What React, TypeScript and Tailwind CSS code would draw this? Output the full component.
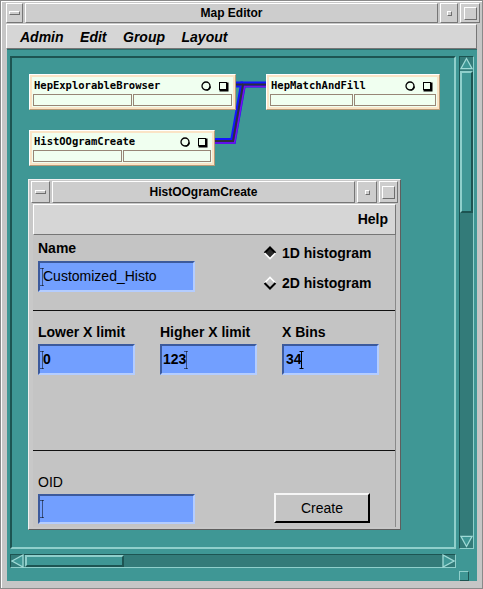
import React from "react";

const SANS = "font-['Liberation_Sans',Arial,Helvetica,sans-serif]";
const MONO = "font-['DejaVu_Sans_Mono','Liberation_Mono',monospace]";

function Raised({ className = "", children }: { className?: string; children?: React.ReactNode }) {
  return (
    <div className={`border border-t-white border-l-white border-r-[#767676] border-b-[#767676] ${className}`}>
      {children}
    </div>
  );
}

function TitleBar({
  title,
  height,
  menuW,
  minW,
  maxW,
}: {
  title: string;
  height: string;
  menuW: string;
  minW: string;
  maxW: string;
}) {
  return (
    <div className={`flex gap-[2px] ${height}`}>
      <Raised className={`${menuW} flex items-center justify-center bg-[#cdcdcd]`}>
        <div className="w-[11px] h-[4px] border border-t-white border-l-white border-r-[#6e6e6e] border-b-[#6e6e6e]" />
      </Raised>
      <Raised className="flex-1 flex items-center justify-center bg-[#cdcdcd] text-[12px] font-bold text-black">
        {title}
      </Raised>
      <Raised className={`${minW} flex items-center justify-center bg-[#cdcdcd]`}>
        <div className="w-[5px] h-[5px] border border-t-white border-l-white border-r-[#6e6e6e] border-b-[#6e6e6e]" />
      </Raised>
      <Raised className={`${maxW} flex items-center justify-center bg-[#cdcdcd]`}>
        <div className="w-[13px] h-[13px] border border-t-white border-l-white border-r-[#6e6e6e] border-b-[#6e6e6e]" />
      </Raised>
    </div>
  );
}

function CircleIcon() {
  return (
    <svg width="11" height="11" viewBox="0 0 11 11">
      <circle cx="5" cy="5" r="4" fill="#f0fff0" stroke="black" strokeWidth="1.3" />
      <path d="M9.2 5.5 A4.3 4.3 0 0 1 5.5 9.2" fill="none" stroke="black" strokeWidth="1.8" />
    </svg>
  );
}

function SquareIcon() {
  return (
    <svg width="11" height="11" viewBox="0 0 11 11">
      <rect x="1.5" y="1.5" width="7" height="7" fill="#f0fff0" stroke="black" strokeWidth="1" />
      <path d="M9.5 1.5 V9.5 H1.5" fill="none" stroke="black" strokeWidth="2" />
    </svg>
  );
}

function Node({ title, className }: { title: string; className: string }) {
  return (
    <div
      className={`absolute h-[36px] bg-[#fae4c6] border border-t-white border-l-white border-r-[#b89c78] border-b-[#b89c78] p-[2px] ${className}`}
    >
      <div className="h-full bg-[#f0fff0] flex flex-col">
        <div className="h-[17px] flex items-center pl-[2px] pr-[4px]">
          <span className={`${MONO} text-[10.5px] font-bold text-black leading-none flex-1`}>{title}</span>
          <div className="flex items-center gap-[6px] pt-[2px]">
            <CircleIcon />
            <SquareIcon />
          </div>
        </div>
        <div className="flex gap-[1px] px-[1px] h-[12px]">
          <div className="flex-1 border border-[#978676] bg-[#f0fff0]" />
          <div className="flex-1 border border-[#978676] bg-[#f0fff0]" />
        </div>
      </div>
    </div>
  );
}

function Cursor({ solid = false }: { solid?: boolean }) {
  return (
    <svg width="5" height="18" viewBox="0 0 5 18" className="shrink-0">
      <path
        d="M0.5 0.5H4.5M2.5 0.5V17.5M0.5 17.5H4.5"
        stroke="black"
        strokeWidth="1"
        strokeDasharray={solid ? undefined : "1 1"}
        fill="none"
      />
    </svg>
  );
}

function Field({ className = "", children }: { className?: string; children?: React.ReactNode }) {
  return (
    <div
      className={`bg-[#729fff] border-2 border-t-[#3c5a9c] border-l-[#3c5a9c] border-r-[#b4cdff] border-b-[#b4cdff] flex items-center text-[14px] text-black ${className}`}
    >
      {children}
    </div>
  );
}

function Radio({ checked, label }: { checked?: boolean; label: string }) {
  return (
    <div className="flex items-center gap-[5px] h-[16px]">
      <svg width="14" height="14" viewBox="0 0 14 14">
        {checked ? (
          <>
            <polygon points="7,1 13,7 7,13 1,7" fill="#2a2a2a" />
            <path d="M1.5 7 L7 1.5 L12.5 7" fill="none" stroke="black" strokeWidth="2" />
            <path d="M1.5 7 L7 12.5 L12.5 7" fill="none" stroke="white" strokeWidth="1.6" />
          </>
        ) : (
          <>
            <path d="M1.5 7 L7 1.5 L12.5 7" fill="none" stroke="white" strokeWidth="1.6" />
            <path d="M1.5 7 L7 12.5 L12.5 7" fill="none" stroke="black" strokeWidth="2" />
          </>
        )}
      </svg>
      <span className="text-[14px] leading-[16px] font-bold">{label}</span>
    </div>
  );
}

function Arrow({ dir }: { dir: "up" | "down" | "left" | "right" }) {
  const pts = {
    up: "7,1 13,12 1,12",
    down: "1,2 13,2 7,13",
    left: "1,7 12,1 12,13",
    right: "2,1 2,13 13,7",
  }[dir];
  return (
    <svg width="14" height="14" viewBox="0 0 14 14">
      <polygon points={pts} fill="#3f9795" stroke="#9fdad6" strokeWidth="1.3" />
    </svg>
  );
}

function Dialog() {
  return (
    <div
      className={`absolute left-[16px] top-[121px] w-[373px] h-[351px] bg-[#c8c8c8] border border-t-[#f0f0f0] border-l-[#f0f0f0] border-r-[#5e5e5e] border-b-[#5e5e5e] px-[2px] pt-[1px] pb-[2px] flex flex-col`}
    >
      <TitleBar title="HistOOgramCreate" height="h-[22px]" menuW="w-[19px]" minW="w-[20px]" maxW="w-[19px]" />
      <div className="mt-[1px] mx-[2px] flex-1 flex flex-col">
        <Raised className="h-[31px] bg-[#d6d6d6] flex items-center justify-end pr-[7px]">
          <span className="text-[14px] font-bold">Help</span>
        </Raised>
        <div className="flex-1 bg-[#c4c4c4] flex flex-col pl-[5px] text-black border-r border-[#8a8a8a]">
          <div className="flex pt-[5px]">
            <div className="flex flex-col w-[157px]">
              <div className="text-[14px] leading-[16px] font-bold">Name</div>
              <Field className="mt-[5px] h-[31px]">
                <Cursor />
                <span className="-ml-[2px]">Customized_Histo</span>
              </Field>
            </div>
            <div className="flex flex-col ml-[68px] pt-[5px] gap-[14px]">
              <Radio checked label="1D histogram" />
              <Radio label="2D histogram" />
            </div>
          </div>
          <div className="mt-[18px] -ml-[5px] h-px bg-[#111]" />
          <div className="mt-[13px] flex gap-[25px]">
            <div className="flex flex-col w-[97px]">
              <div className="text-[14px] leading-[16px] font-bold">Lower X limit</div>
              <Field className="mt-[4px] h-[31px]">
                <Cursor />
                <span className="-ml-[2px] font-bold">0</span>
              </Field>
            </div>
            <div className="flex flex-col w-[97px]">
              <div className="text-[14px] leading-[16px] font-bold whitespace-nowrap">Higher X limit</div>
              <Field className="mt-[4px] h-[31px] pl-[1px]">
                <span className="font-bold">123</span>
                <span className="-ml-[2px] flex">
                  <Cursor />
                </span>
              </Field>
            </div>
            <div className="flex flex-col w-[97px]">
              <div className="text-[14px] leading-[16px] font-bold">X Bins</div>
              <Field className="mt-[4px] h-[31px] pl-[2px]">
                <span className="font-bold">34</span>
                <span className="-ml-[3px] flex">
                  <Cursor solid />
                </span>
              </Field>
            </div>
          </div>
          <div className="mt-[75px] -ml-[5px] h-px bg-[#111]" />
          <div className="mt-[23px] flex items-end">
            <div className="flex flex-col w-[157px]">
              <div className="text-[14px] leading-[16px]">OID</div>
              <Field className="mt-[4px] h-[30px]">
                <Cursor />
              </Field>
            </div>
            <button className="ml-[79px] mb-[1px] w-[96px] h-[30px] bg-[#c4c4c4] border-2 border-t-[#f6f6f6] border-l-[#f6f6f6] border-r-black border-b-black text-[14px] flex items-center justify-center">
              Create
            </button>
          </div>
        </div>
      </div>
    </div>
  );
}

export default function App() {
  return (
    <div
      className={`${SANS} w-[483px] h-[589px] bg-[#c6c6c6] border border-[#8a8a8a] shadow-[inset_1px_1px_0_#ffffff] pt-[2px] px-[5px] pb-[11px] flex flex-col text-black`}
    >
      <div className="-mr-[3px]">
        <TitleBar title="Map Editor" height="h-[20px]" menuW="w-[17px]" minW="w-[18px]" maxW="w-[20px]" />
      </div>
      <Raised className="mt-[1px] h-[26px] bg-[#d6d6d6] flex items-center pl-[13px] pt-[2px] gap-[16.5px] text-[14px] font-bold italic">
        <span>Admin</span>
        <span>Edit</span>
        <span>Group</span>
        <span>Layout</span>
      </Raised>
      <div className="ml-[1px] flex-1 bg-[#3f9795] border-t border-[#2a6c6a] pt-[6px] px-[3px] grid grid-cols-[446px_15px] grid-rows-[493px_14px_8px] gap-x-[3px] gap-y-[5px]">
        {/* canvas */}
        <div className="relative border-2 border-t-[#1d5452] border-l-[#1d5452] border-r-[#8fcfcb] border-b-[#8fcfcb] bg-[#3f9795] overflow-hidden">
          <svg className="absolute inset-0" width="442" height="489">
            <polyline points="203,83 221,83 231,26.5 254,26.5" fill="none" stroke="#1414ff" strokeWidth="6" />
            <polyline points="224,26.5 231,26.5" fill="none" stroke="#1414ff" strokeWidth="6" />
            <polyline
              points="203,85 222.5,85 232.5,28.5 254,28.5"
              fill="none"
              stroke="#7a10e6"
              strokeWidth="1.6"
            />
            <polyline points="203,83 221,83 231,26.5 254,26.5" fill="none" stroke="#2e2e3e" strokeWidth="2" />
            <polyline points="224,26.5 231,26.5" fill="none" stroke="#2e2e3e" strokeWidth="2" />
          </svg>
          <Node title="HepExplorableBrowser" className="left-[17px] top-[16px] w-[207px]" />
          <Node title="HepMatchAndFill" className="left-[254px] top-[16px] w-[174px]" />
          <Node title="HistOOgramCreate" className="left-[17px] top-[72px] w-[186px]" />
          <Dialog />
        </div>
        {/* vertical scrollbar */}
        <div className="flex flex-col bg-[#337b79] border border-t-[#1d5452] border-l-[#1d5452] border-r-[#8fcfcb] border-b-[#8fcfcb]">
          <div className="h-[14px] flex items-center justify-center">
            <Arrow dir="up" />
          </div>
          <div className="h-[142px] bg-[#3f9795] border-2 border-t-[#8fcfcb] border-l-[#8fcfcb] border-r-[#1d5452] border-b-[#1d5452]" />
          <div className="flex-1" />
          <div className="h-[14px] flex items-center justify-center">
            <Arrow dir="down" />
          </div>
        </div>
        {/* horizontal scrollbar */}
        <div className="flex bg-[#337b79] border border-t-[#1d5452] border-l-[#1d5452] border-r-[#8fcfcb] border-b-[#8fcfcb]">
          <div className="w-[14px] flex items-center justify-center">
            <Arrow dir="left" />
          </div>
          <div className="w-[99px] bg-[#3f9795] border-2 border-t-[#8fcfcb] border-l-[#8fcfcb] border-r-[#1d5452] border-b-[#1d5452]" />
          <div className="flex-1" />
          <div className="w-[14px] flex items-center justify-center">
            <Arrow dir="right" />
          </div>
        </div>
        <div />
        <div />
        <div className="w-[10px] h-[10px] -mt-[2px] bg-[#3f9795] border border-t-[#8fcfcb] border-l-[#8fcfcb] border-r-[#1d5452] border-b-[#1d5452]" />
      </div>
    </div>
  );
}
